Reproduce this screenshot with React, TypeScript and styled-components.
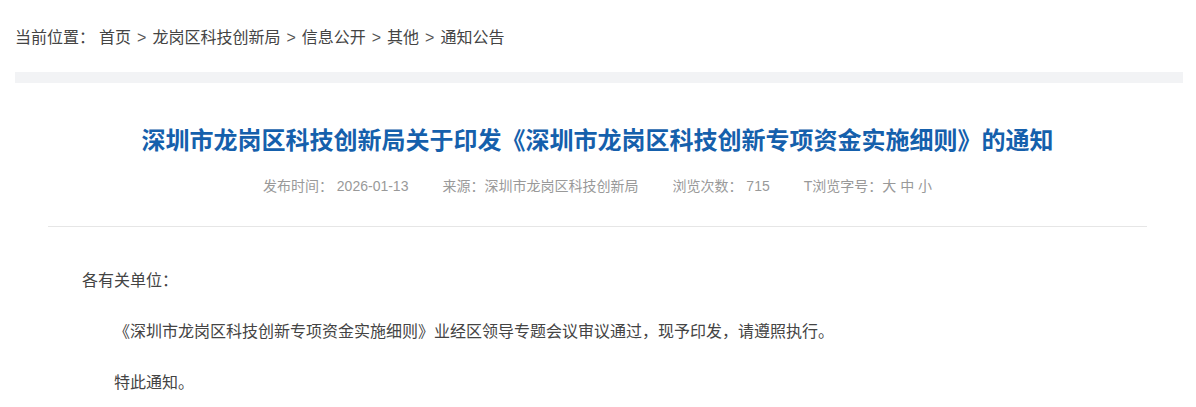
import styled, { createGlobalStyle } from "styled-components";

const GlobalStyle = createGlobalStyle`
  body {
    margin: 0;
    background: #fff;
    font-family: "Liberation Sans", "Noto Sans CJK SC", sans-serif;
  }
`;

const crumbs = ["首页", "龙岗区科技创新局", "信息公开", "其他", "通知公告"];

function App() {
  return (
    <>
      <GlobalStyle />
      <Page>
        {/* ------ breadcrumb ------ */}
        <Breadcrumb>
          <CrumbLabel>当前位置：</CrumbLabel>
          {crumbs.map((c, i) => (
            <span key={c}>
              {i > 0 && <Sep>&gt;</Sep>}
              <CrumbLink href="#">{c}</CrumbLink>
            </span>
          ))}
        </Breadcrumb>

        <GrayBar />

        {/* ------ article ------ */}
        <Article>
          <Header>
            <Title>
              深圳市龙岗区科技创新局关于印发《深圳市龙岗区科技创新专项资金实施细则》的通知
            </Title>
            <Meta>
              <span>发布时间： 2026-01-13</span>
              <span>来源：深圳市龙岗区科技创新局</span>
              <span>浏览次数： 715</span>
              <span>
                T浏览字号：<SizeLink href="#">大</SizeLink>{" "}
                <SizeLink href="#">中</SizeLink>{" "}
                <SizeLink href="#">小</SizeLink>
              </span>
            </Meta>
          </Header>

          <Content>
            <Para>各有关单位：</Para>
            <Para indent>
              《深圳市龙岗区科技创新专项资金实施细则》业经区领导专题会议审议通过，现予印发，请遵照执行。
            </Para>
            <Para indent>特此通知。</Para>
          </Content>
        </Article>
      </Page>
    </>
  );
}

export default App;

// ------- component styles -------
const Page = styled.div`
  padding: 0 13px 0 15px;
`;

const Breadcrumb = styled.div`
  padding-top: 26px;
  line-height: 24px;
  font-size: 16px;
  color: #444;
  margin-bottom: 22px;
`;

const CrumbLabel = styled.span`
  margin-right: 4px;
`;

const Sep = styled.span`
  margin: 0 6px;
  color: #555;
`;

const CrumbLink = styled.a`
  color: #444;
  text-decoration: none;
`;

const GrayBar = styled.div`
  height: 11px;
  background: #f2f3f5;
`;

const Article = styled.div`
  padding: 0 36px 0 33px;
`;

const Header = styled.div`
  padding-top: 40px;
  padding-bottom: 28px;
  border-bottom: 1px solid #e6e6e6;
  text-align: center;
`;

const Title = styled.h1`
  margin: 0;
  font-size: 24px;
  line-height: 36px;
  font-weight: 700;
  color: #1560ac;
`;

const Meta = styled.div`
  margin-top: 15px;
  display: flex;
  justify-content: center;
  gap: 34px;
  font-size: 14px;
  line-height: 24px;
  color: #999;
`;

const SizeLink = styled.a`
  color: #999;
  text-decoration: none;
`;

const Content = styled.div`
  padding: 38px 0 0 34px;
`;

const Para = styled.p<{ indent?: boolean }>`
  margin: 0 0 19px;
  font-size: 16px;
  line-height: 32px;
  color: #444;
  text-indent: ${(p) => (p.indent ? "2em" : "0")};
`;
